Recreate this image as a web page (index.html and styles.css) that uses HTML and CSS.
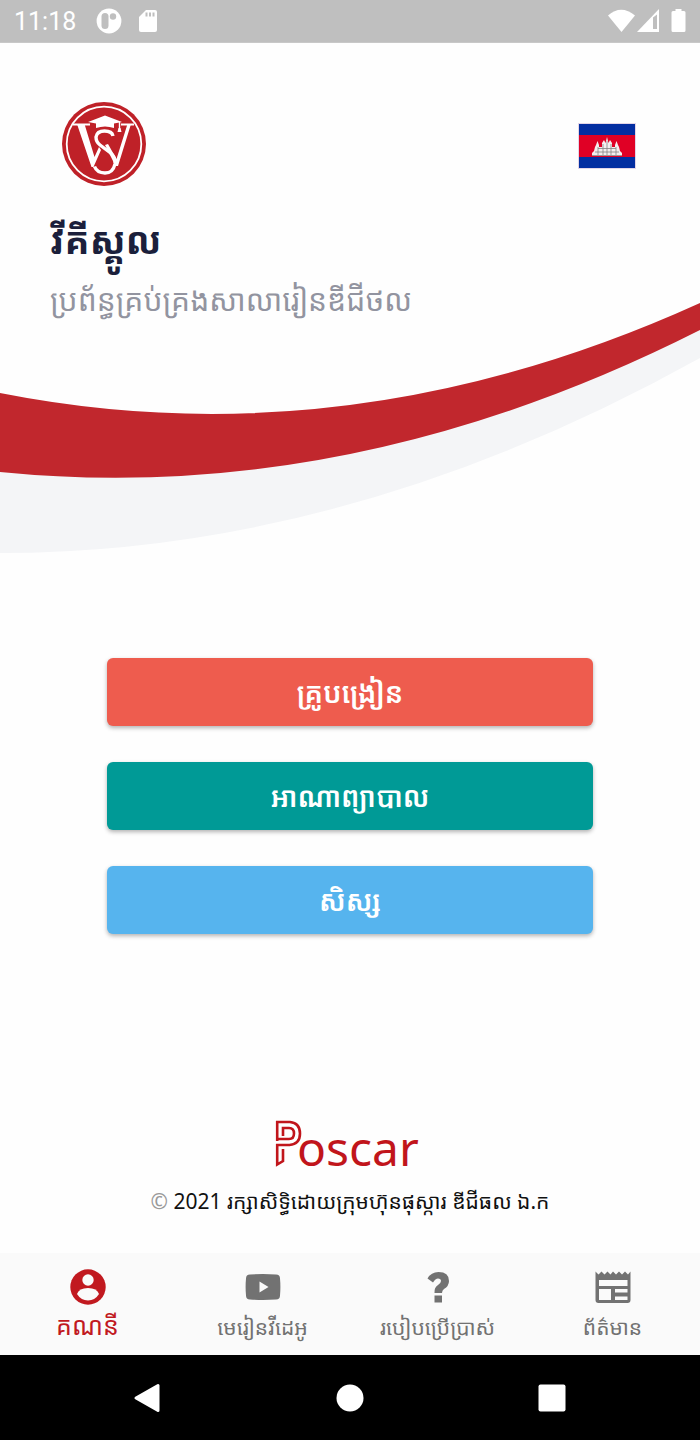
FILE: index.html
```html
<!DOCTYPE html>
<html lang="km">
<head>
<meta charset="utf-8">
<meta name="viewport" content="width=device-width, initial-scale=1">
<title>វីគីស្គូល</title>
<link rel="stylesheet" href="styles.css">
</head>
<body>
<div class="status">
  <span class="status-time">11:18</span>
  <svg class="status-app" viewBox="0 0 26 26" aria-hidden="true"><circle cx="13" cy="13" r="12.4" fill="#fff"/><rect x="5.500" y="5" width="7" height="16" rx="3.500" fill="#bfbfbf"/><circle cx="17" cy="8.500" r="3.200" fill="#bfbfbf"/></svg>
  <svg class="status-card" viewBox="0 0 20 24" aria-hidden="true"><path d="M8 1h9a2 2 0 0 1 2 2v18a2 2 0 0 1-2 2H3a2 2 0 0 1-2-2V8z" fill="#fff"/><path d="M8.500 3.500v4M12 3.500v4M15.500 3.500v4" stroke="#bfbfbf" stroke-width="2"/></svg>
  <svg class="status-signals" viewBox="0 0 80 26" aria-hidden="true"><path d="M0 7.500Q13-4 27 7.500L13.500 24z" fill="#fff"/><path d="M51 1v23H29z" fill="#fff"/><path d="M45 9.500l4-3V21h-4z" fill="#bfbfbf"/><path d="M67.500 1h6v2h2.500a1.500 1.500 0 0 1 1.500 1.500v18a1.500 1.500 0 0 1-1.500 1.500H65a1.500 1.500 0 0 1-1.500-1.500v-18A1.500 1.500 0 0 1 65 3h2.500z" fill="#fff"/></svg>
</div>

<main class="screen">
  <header class="hero">
    <svg class="wave" viewBox="0 300 700 254" preserveAspectRatio="none" aria-hidden="true">
      <path d="M0 440Q350 500 700 325V358Q350 553 0 553z" fill="#f4f5f7"/>
      <path d="M0 393Q350 462 700 303V330Q350 507 0 472z" fill="#c1272d"/>
    </svg>
    <div class="intro">
      <div class="brand-row">
        <svg class="logo" viewBox="0 0 84 84" role="img" aria-label="WS">
          <circle cx="42" cy="42" r="42" fill="#bf2128"/>
          <circle cx="42" cy="42" r="37.300" fill="none" stroke="#fff" stroke-width="1.800"/>
          <path d="M11 22.500h17M59 22.500h13" stroke="#fff" stroke-width="2"/>
          <path d="M15 22h7.500L32.500 55l4.500-10 2 3-7.500 17h-2z" fill="#fff"/>
          <path d="M65.500 22h3.500L56 64h-2.500L43 43l3-1 8.500 15z" fill="#fff"/>
          <path d="M51 34Q50 29 42.500 29T34 35Q34 40 38 43L48 50.500Q54 55 53 62 51 71 43 71 35 71 32.500 64.500" fill="none" stroke="#fff" stroke-width="3.400"/>
          <path d="M26 20l17-6.500L60 20l-8 1.500V26q-9-3-18 0v-4.500z" fill="#fff"/>
          <path d="M57.500 20v9" stroke="#fff" stroke-width="1.400"/><path d="M56.500 26h2l1 4h-4z" fill="#fff"/>
        </svg>
        <button class="language" aria-label="ភាសាខ្មែរ">
          <svg viewBox="0 0 58 46" aria-hidden="true">
            <path d="M0 0h58v46H0z" fill="#e3d5e8"/><path d="M1 1h56v44H1z" fill="#032ea1"/><path d="M1 12h56v22H1z" fill="#e00025"/>
            <path d="M14 33v-3l2-2 1-4 1-2 1.500-4 1.500 4v2h3v-4l2-3 1.500 3 1.500-6 1.500 6L32 17l2 3v4h3v-2l1.500-4 1.500 4 1 2 1 4 2 2v3z" fill="#f4eeee"/>
            <path d="M14 32.500h30M17 29h24M20 25.500h18M20 24v8M25 21v11M29 18v14M33 21v11M38 24v8" stroke="#555" stroke-width=".8" opacity=".7"/>
          </svg>
        </button>
      </div>
      <h1 class="title">វីគីស្គូល</h1>
      <p class="subtitle">ប្រព័ន្ធគ្រប់គ្រងសាលារៀនឌីជីថល</p>
    </div>
  </header>

  <div class="roles">
    <button class="role role-teacher">គ្រូបង្រៀន</button>
    <button class="role role-parent">អាណាព្យាបាល</button>
    <button class="role role-student">សិស្ស</button>
  </div>

  <footer class="company">
    <svg class="poscar" viewBox="0 0 148 50" role="img" aria-label="Poscar">
      <path d="M1.200 21V2H14q10 1 10 11.500T13.500 25H1.200V44.500L7 41V29M7 16V8h6q5 0 5 5.500T13 19H1.200" fill="none" stroke="#c1151b" stroke-width="2.600"/>
      <text class="poscar-name" x="21" y="46">oscar</text>
    </svg>
    <p class="copyright"><span class="mark">©</span> 2021 រក្សាសិទ្ធិដោយក្រុមហ៊ុនផុស្ការ ឌីជីធល ឯ.ក</p>
  </footer>
</main>

<nav class="tabs">
  <a class="tab tab-active" href="#account">
    <svg viewBox="0 0 36 36" aria-hidden="true"><circle cx="18" cy="18" r="17.700" fill="currentColor"/><circle cx="18" cy="11" r="5.700" fill="#fafafa"/><path d="M7 25q2-6 11-6t11 6q-4 6.500-11 6.500T7 25z" fill="#fafafa"/></svg>
    <span>គណនី</span>
  </a>
  <a class="tab" href="#videos">
    <svg viewBox="0 0 36 36" aria-hidden="true"><path d="M5 5.500q13-.8 26 0 4 0 4 4 .8 8.500 0 17 0 4-4 4-13 .8-26 0-4 0-4-4-.8-8.500 0-17 0-4 4-4z" fill="currentColor"/><path d="M14.500 12.500v11l9-5.500z" fill="#fafafa"/></svg>
    <span>មេរៀនវីដេអូ</span>
  </a>
  <a class="tab" href="#help">
    <svg viewBox="0 0 36 36" aria-hidden="true"><path d="M7.500 9.500Q11 3 18.500 3q10.500 0 10.500 9 0 5-5 8-2 1.500-2 4h-7.500q-.5-5.500 3.500-8 3-2 3-4 0-2.500-3-2.500-2.500 0-5 4z" fill="currentColor"/><path d="M14.500 26.500H22V33.500h-7.500z" fill="currentColor"/></svg>
    <span>របៀបប្រើប្រាស់</span>
  </a>
  <a class="tab" href="#news">
    <svg viewBox="0 0 36 36" aria-hidden="true"><path fill-rule="evenodd" d="M.5 2.500l3 3 3-3 3 3 3-3 3 3 2.500-3 3 3 3-3 3 3 3-3 3 3 2.500-3V31q0 3-3 3H3.500q-3 0-3-3zM4 11v6h28.500v-6zM4 20v11h12V20zM20 20v3.500h12.500V20zM20 27.500V31h12.500v-3.500z" fill="currentColor"/></svg>
    <span>ព័ត៌មាន</span>
  </a>
</nav>

<div class="system">
  <button class="system-key" aria-label="Back"><svg viewBox="0 0 30 30" aria-hidden="true"><path d="M3 15L25 2.500v25z" fill="#fff" stroke="#fff" stroke-width="3" stroke-linejoin="round"/></svg></button>
  <button class="system-key" aria-label="Home"><svg viewBox="0 0 30 30" aria-hidden="true"><circle cx="15" cy="15" r="13.500" fill="#fff"/></svg></button>
  <button class="system-key" aria-label="Recent"><svg viewBox="0 0 30 30" aria-hidden="true"><rect x="1.500" y="1.500" width="27" height="27" rx="2" fill="#fff"/></svg></button>
</div>
</body>
</html>
```

FILE: styles.css
```css
* { box-sizing: border-box; }

body {
  margin: 0;
  min-height: 100vh;
  display: flex;
  flex-direction: column;
  background: #fefefe;
  font-family: "Noto Sans Khmer", "Khmer OS", Roboto, "Noto Sans", sans-serif;
}

h1, p { margin: 0; }
button { border: 0; padding: 0; background: none; font: inherit; }
svg { display: block; }

.status {
  display: flex;
  align-items: center;
  height: 43px;
  padding: 0 12px 0 14px;
  background: #bfbfbf;
  border-bottom: 1px solid #c8c8c8;
  color: #fff;
}
.status-time { font: 25px/43px Roboto, sans-serif; }
.status-app { width: 26px; margin-left: 20px; }
.status-card { width: 20px; margin-left: 16px; }
.status-signals { width: 80px; margin-left: auto; }

.screen { flex: 1; display: flex; flex-direction: column; }

.hero { display: grid; min-height: 511px; }
.wave { grid-area: 1 / 1; align-self: end; width: 100%; height: 254px; }
.intro { grid-area: 1 / 1; position: relative; padding: 59px 50px 0; }
.brand-row { display: flex; align-items: center; justify-content: space-between; padding: 0 14px 0 12px; }
.logo { width: 84px; }
.language { width: 58px; margin-top: 4px; }
.title { margin-top: 22px; font-size: 37px; line-height: 64px; font-weight: 700; color: #1b1f3b; }
.subtitle { font-size: 30px; line-height: 56px; color: #9294a0; }

.roles { display: flex; flex-direction: column; gap: 36px; padding: 104px 107px 0; }
.role {
  height: 68px;
  border-radius: 6px;
  box-shadow: 0 2px 4px rgba(0, 0, 0, .3);
  color: #fff;
  font-size: 28px;
  font-weight: 600;
}
.role-teacher { background: #ee5c4e; }
.role-parent { background: #009a96; }
.role-student { background: #56b4ee; }

.company { display: flex; flex-direction: column; align-items: center; margin-top: auto; padding-bottom: 32px; }
.poscar { width: 148px; overflow: visible; }
.poscar-name { font: 48px "Noto Sans", sans-serif; fill: #c1151b; }
.copyright { margin-top: 11px; font-size: 21px; line-height: 40px; color: #111; }
.mark { color: #999; }

.tabs { display: grid; grid-template-columns: repeat(4, 1fr); height: 102px; background: #fafafa; }
.tab {
  display: flex;
  flex-direction: column;
  align-items: center;
  padding-top: 16px;
  color: #727272;
  font-size: 21px;
  line-height: 44px;
  text-decoration: none;
  white-space: nowrap;
}
.tab svg { width: 36px; }
.tab-active { color: #c1191f; font-size: 25px; line-height: 40px; }

.system { display: flex; justify-content: space-between; align-items: center; height: 85px; padding: 0 19%; background: #000; }
.system-key svg { width: 30px; }
```
